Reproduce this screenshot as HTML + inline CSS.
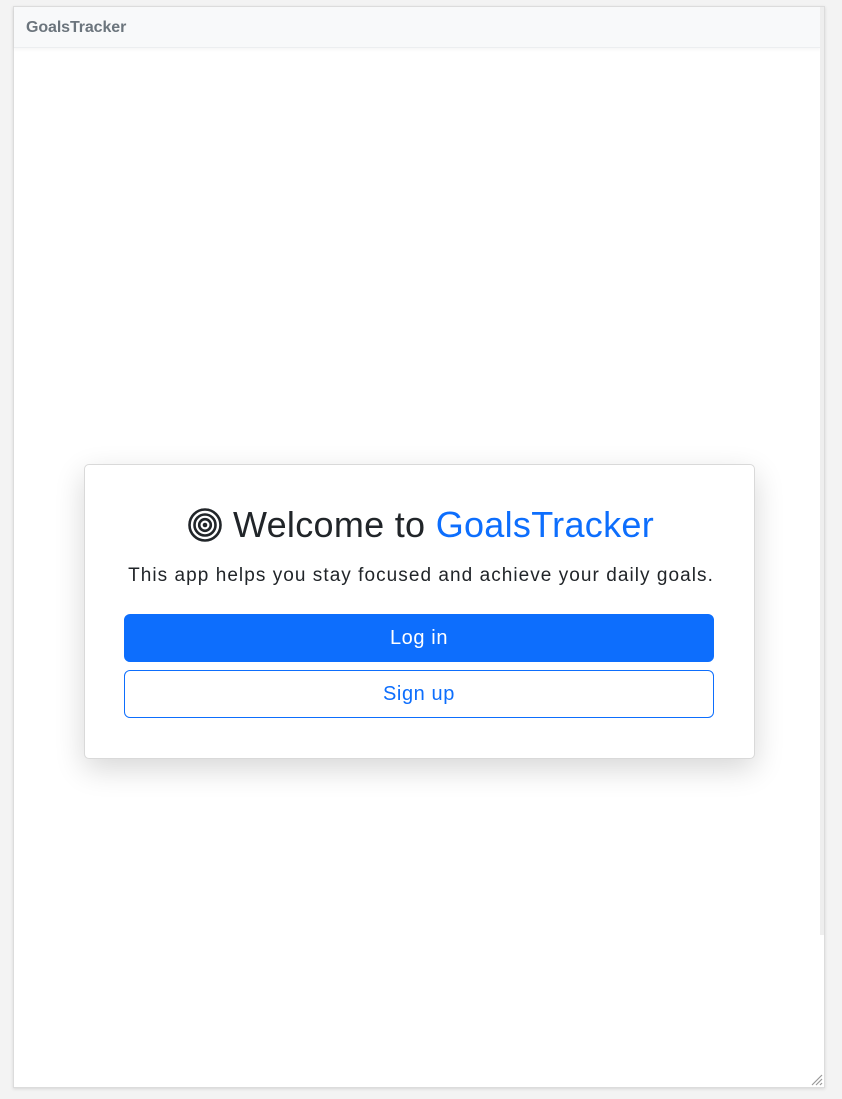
<!DOCTYPE html>
<html><head><meta charset="utf-8"><style>
html,body{margin:0;padding:0;width:842px;height:1099px;background:#f3f3f3;overflow:hidden;font-family:"Liberation Sans","DejaVu Sans",sans-serif;}
.frame{position:absolute;left:13px;top:6px;width:810px;height:1080px;background:#fff;border:1px solid #dcdcdc;box-shadow:0 1px 3px rgba(0,0,0,.12);}
.hdr{position:absolute;left:0;top:0;width:806px;height:40px;background:#f8f9fa;border-bottom:1px solid #eceef0;box-shadow:0 2px 3px rgba(0,0,0,.04);}
.hdr span{position:absolute;left:12px;top:12px;font-size:16px;font-weight:bold;color:#6c757d;letter-spacing:-0.1px;}
.sb{position:absolute;left:806px;top:0;width:4px;height:928px;background:#eeeeee;}
.card{position:absolute;left:84px;top:464px;width:669px;height:293px;background:#fff;border:1px solid #d9d9d9;border-radius:5px;box-shadow:0 10px 30px rgba(0,0,0,.16);}
h1{position:absolute;left:0;right:0;top:504px;margin:0;text-align:center;font-size:36px;font-weight:normal;color:#212529;line-height:42px;letter-spacing:0.3px;}
h1 .b{color:#0d6efd;}
h1 svg{vertical-align:-5px;margin-right:11px;}
p{position:absolute;left:0;right:0;top:563px;margin:0;text-align:center;font-size:19px;color:#212529;line-height:26px;letter-spacing:1.05px;}
.btn{position:absolute;left:124px;width:590px;height:48px;box-sizing:border-box;border-radius:6px;text-align:center;font-size:20px;line-height:46px;letter-spacing:0.6px;}
.l{top:614px;background:#0d6efd;color:#fff;border:1px solid #0d6efd;}
.s{top:670px;background:#fff;color:#0d6efd;border:1px solid #0d6efd;}
.grip{position:absolute;left:795px;top:1065px;}
</style></head><body>
<div class="frame"><div class="hdr"><span>GoalsTracker</span></div><div class="sb"></div>
<svg class="grip" width="14" height="14"><path d="M13 3L3 13M13 7L7 13M13 11L11 13" stroke="#999" stroke-width="1.2"/></svg></div>
<div class="card"></div>
<h1><svg width="34" height="34" viewBox="0 0 34 34"><circle cx="17" cy="17" r="15.5" fill="none" stroke="#212529" stroke-width="2.6"/><circle cx="17" cy="17" r="10.5" fill="none" stroke="#212529" stroke-width="2.6"/><circle cx="17" cy="17" r="5.8" fill="none" stroke="#212529" stroke-width="2.6"/><circle cx="17" cy="17" r="2.3" fill="#212529"/></svg>Welcome to <span class="b">GoalsTracker</span></h1>
<p>This app helps you stay focused and achieve your daily goals.</p>
<div class="btn l">Log in</div>
<div class="btn s">Sign up</div>
</body></html>
